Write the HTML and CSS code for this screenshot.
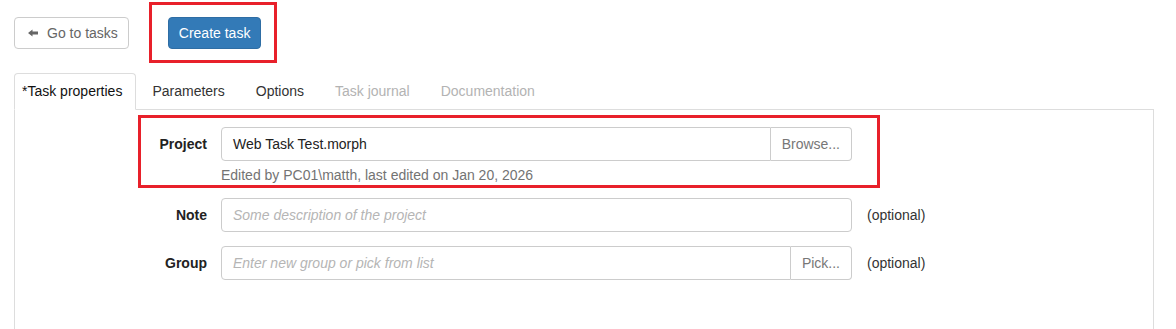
FILE: index.html
```html
<!DOCTYPE html>
<html lang="en">
  <head>
    <meta charset="UTF-8" />
    <meta name="viewport" content="width=device-width, initial-scale=1.0" />
    <title>Create task</title>
    <link rel="stylesheet" href="styles.css">
  </head>

  <body>
    <div class="page">
      <!-- Toolbar -->
      <div class="toolbar">
        <button class="btn btn-default">
          <svg class="arrow" width="10" height="8" viewBox="0 0 10 8">
            <path d="M0 4 L4.5 0.5 V2.5 H10 V5.5 H4.5 V7.5 Z" fill="#666" />
          </svg>
          Go to tasks
        </button>
        <button class="btn btn-primary">Create task</button>
      </div>

      <!-- Tabs -->
      <ul class="tabs">
        <li class="active"><a>*Task properties</a></li>
        <li><a>Parameters</a></li>
        <li><a>Options</a></li>
        <li class="disabled"><a>Task journal</a></li>
        <li class="disabled"><a>Documentation</a></li>
      </ul>

      <div class="tab-panel">
        <div class="form-row">
          <label class="form-label">Project</label>
          <div class="field">
            <div class="input-group">
              <div class="input">Web Task Test.morph</div>
              <button class="addon">Browse...</button>
            </div>
            <p class="help">Edited by PC01\matth, last edited on Jan 20, 2026</p>
          </div>
        </div>

        <div class="form-row">
          <label class="form-label">Note</label>
          <div class="field">
            <div class="input placeholder">Some description of the project</div>
          </div>
          <span class="optional">(optional)</span>
        </div>

        <div class="form-row">
          <label class="form-label">Group</label>
          <div class="field">
            <div class="input-group">
              <div class="input placeholder">Enter new group or pick from list</div>
              <button class="addon">Pick...</button>
            </div>
          </div>
          <span class="optional">(optional)</span>
        </div>
      </div>

      <!-- red annotation boxes -->
      <div class="mark mark-create"></div>
      <div class="mark mark-project"></div>
    </div>
  </body>
</html>
```

FILE: styles.css
```css
body {
  margin: 0;
  font-family: "Liberation Sans", Arial, sans-serif;
  font-size: 14px;
  line-height: 20px;
  color: #333;
  background: #fff;
  overflow: hidden;
}

.page {
  position: relative;
  padding: 17px 0 0 14px;
}

.toolbar {
  display: flex;
  gap: 39px;
}

.btn {
  font-family: "Liberation Sans", Arial, sans-serif;
  font-size: 14px;
  line-height: 20px;
  height: 32px;
  border-radius: 4px;
  border: 1px solid #ccc;
  display: inline-flex;
  align-items: center;
  cursor: pointer;
}

.btn-default {
  background: #fff;
  color: #666;
  padding: 0 10px 0 13px;
}

.arrow {
  margin-right: 9px;
}

.btn-primary {
  background: #337ab7;
  border-color: #2e6da4;
  color: #fff;
  padding: 0 10px;
}

/* Tabs */
.tabs {
  display: flex;
  list-style: none;
  margin: 24px 0 -1px 0;
  padding: 0;
  position: relative;
}

.tabs a {
  display: block;
  padding: 7px 14px 8px 15px;
  border: 1px solid transparent;
  border-radius: 4px 4px 0 0;
  color: #333;
}

.tabs .active a {
  padding-left: 7px;
  padding-right: 13px;
  border-color: #ddd;
  border-bottom-color: #fff;
  background: #fff;
  color: #111;
}

.tabs .disabled a {
  color: #b3b3b3;
}

.tab-panel {
  width: 1140px;
  min-height: 240px;
  box-sizing: border-box;
  border: 1px solid #ddd;
  padding-top: 17px;
}

/* Form */
.form-row {
  display: flex;
  align-items: flex-start;
  margin-bottom: 14px;
}

.form-label {
  width: 192px;
  text-align: right;
  font-weight: 700;
  line-height: 34px;
  color: #222;
}

.field {
  width: 631px;
  margin-left: 14px;
}

.input-group {
  display: flex;
}

.input {
  flex: 1;
  height: 34px;
  box-sizing: border-box;
  border: 1px solid #ccc;
  border-radius: 4px;
  padding: 6px 11px;
  color: #222;
}

.input-group .input {
  border-radius: 4px 0 0 4px;
}

.placeholder {
  color: #b5b5b5;
  font-style: italic;
}

.addon {
  font-family: "Liberation Sans", Arial, sans-serif;
  font-size: 14px;
  height: 34px;
  background: #fff;
  border: 1px solid #ccc;
  border-left: none;
  border-radius: 0 4px 4px 0;
  color: #777;
  padding: 0 11px;
}

.help {
  margin: 4px 0 -1px 0;
  color: #737373;
}

.optional {
  margin-left: 15px;
  line-height: 34px;
}

/* Red annotation boxes */
.mark {
  position: absolute;
  border: 3px solid #e8202a;
  box-sizing: border-box;
}

.mark-create {
  left: 149px;
  top: 2px;
  width: 128px;
  height: 61px;
}

.mark-project {
  left: 138px;
  top: 115px;
  width: 742px;
  height: 73px;
}
```
